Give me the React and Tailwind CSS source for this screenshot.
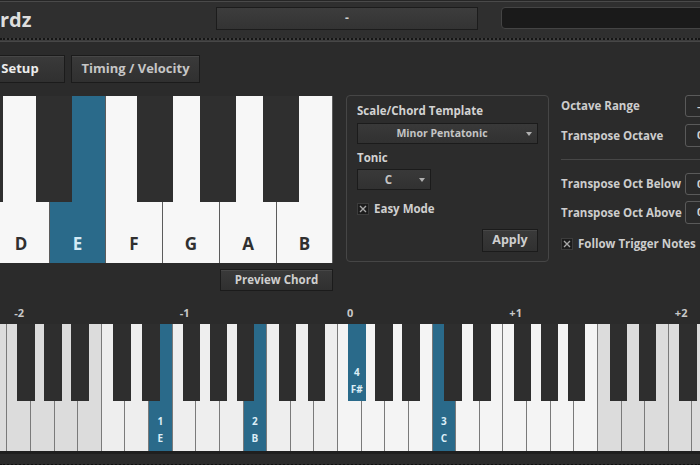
const TOP_WHITE = [
  { note: "D", w: "w-[57px]" },
  { note: "E", w: "w-[56px]", on: true },
  { note: "F", w: "w-[57px]" },
  { note: "G", w: "w-[57px]" },
  { note: "A", w: "w-[57px]" },
  { note: "B", w: "w-[56px]" },
];

const TOP_BLACK = ["left-[-33px]", "left-[36px]", "left-[137px]", "left-[200px]", "left-[263px]"];

const NAMES = ["E", "F", "G", "A", "B", "C", "D"];
const OCTAVE_W = 165.5;
const F_START = 7.34;
const BLACK_OFFSETS = [9.7, 36.7, 63.7, 105.7, 134.7];

// chord notes on the lower keyboard
const ON_WHITE = { 7: "1", 11: "2", 19: "3" };

const whiteKeys = Array.from({ length: 31 }, (_, i) => ({
  name: NAMES[i % 7],
  degree: ON_WHITE[i],
  shade: i < 5 || i >= 26 ? "bg-[#dcdcdc]" : i < 15 ? "bg-[#eeeeee]" : "bg-[#f4f4f4]",
}));

const blackKeys = [];
for (let k = -1; k < 5; k++) {
  BLACK_OFFSETS.forEach((off, j) => {
    const left = F_START + k * OCTAVE_W + off;
    if (left > -20 && left < 700) {
      blackKeys.push({ left, on: k === 2 && j === 0 });
    }
  });
}

const Arrow = () => (
  <svg width="6" height="4" viewBox="0 0 6 4" className="shrink-0">
    <path d="M0 0 L6 0 L3 4 Z" fill="#b0b0b0" />
  </svg>
);

const Check = () => (
  <div className="w-[12px] h-[12px] bg-[#1c1c1c] border border-[#3c3c3c] flex items-center justify-center shrink-0">
    <svg width="8" height="8" viewBox="0 0 8 8">
      <path d="M1 1 L7 7 M7 1 L1 7" stroke="#a8a8a8" strokeWidth="1.4" />
    </svg>
  </div>
);

const Btn = ({ children, className = "" }) => (
  <div
    className={`flex items-center justify-center whitespace-nowrap bg-gradient-to-b from-[#3a3a3a] to-[#303030] border border-[#1b1b1b] shadow-[inset_0_1px_0_#474747] font-bold ${className}`}
  >
    {children}
  </div>
);

const NumBox = ({ value }) => (
  <div className="w-[40px] h-full shrink-0 rounded-[3px] border border-[#5a5a5a] bg-[#2a2a2a] flex items-center pl-[11px] text-[11px] font-bold text-[#cfcfcf]">
    {value}
  </div>
);

export default function App() {
  return (
    <div
      className="w-[700px] h-[465px] overflow-hidden bg-[#2b2b2b] text-[#d0d0d0]"
      style={{ fontFamily: '"Open Sans", "Noto Sans", sans-serif' }}
    >
      {/* header */}
      <div className="bg-[#262626] pt-px">
        <div className="h-[37px] bg-[#2f2f2f] border-t border-[#4a4a4a] flex items-center">
          <div className="w-[216px] shrink-0 text-[20px] font-bold text-[#dedede] leading-none">rdz</div>
          <div className="w-[262px] shrink-0 h-[23px] -mt-[4px] bg-gradient-to-b from-[#3d3d3d] to-[#333333] border border-[#1c1c1c] flex items-center justify-center text-[12px] font-bold text-[#cfcfcf]">
            -
          </div>
          <div className="ml-[23px] w-[230px] shrink-0 h-[22px] -mt-[4px] rounded-[4px] bg-[#1a1a1a] border border-[#444]" />
        </div>
        <div className="h-[3px] bg-[#3b3b3b] border-t-2 border-dotted border-[#151515]" />
        <div className="h-px bg-[#474747]" />
      </div>

      {/* tabs */}
      <div className="flex gap-[6px] mt-[13px] h-[28px]">
        <Btn className="w-[90px] -ml-[25px] text-[13px] text-[#ececec]">Setup</Btn>
        <Btn className="w-[129px] text-[13px] text-[#c6c6c6]">Timing / Velocity</Btn>
      </div>

      {/* main row */}
      <div className="flex items-start mt-[12px]">
        <div className="w-[333px] shrink-0 flex flex-col">
          <div className="relative h-[167px] mt-px overflow-hidden">
            <div className="flex h-full -ml-[7px]">
              {TOP_WHITE.map((k) => (
                <div
                  key={k.note}
                  className={`${k.w} h-full border-r border-[#5c5c5c] flex items-end justify-center pb-[7px] text-[17px] font-bold ${
                    k.on ? "bg-[#2a6a8a] text-[#d4eaf5]" : "bg-[#f7f7f7] text-[#303030]"
                  }`}
                >
                  {k.note}
                </div>
              ))}
            </div>
            {TOP_BLACK.map((l) => (
              <div key={l} className={`absolute top-0 ${l} w-[36px] h-[106px] bg-[#2f2f2f]`} />
            ))}
          </div>
          <Btn className="self-end w-[113px] h-[22px] mt-[6px] text-[11.5px] text-[#cfcfcf]">Preview Chord</Btn>
        </div>

        {/* scale panel */}
        <div className="ml-[13px] w-[203px] h-[167px] shrink-0 rounded-[4px] border border-[#464646] bg-[#2c2c2c] px-[10px] pt-[7px] flex flex-col">
          <div className="text-[11.5px] font-bold leading-[16px] text-[#d2d2d2] whitespace-nowrap">Scale/Chord Template</div>
          <div className="mt-[4px] w-[181px] h-[21px] bg-gradient-to-b from-[#393939] to-[#313131] border border-[#1b1b1b] flex items-center pr-[5px]">
            <div className="flex-1 text-center text-[10.5px] font-bold text-[#c4c4c4]">Minor Pentatonic</div>
            <Arrow />
          </div>
          <div className="mt-[6px] text-[11.5px] font-bold leading-[16px] text-[#d2d2d2]">Tonic</div>
          <div className="mt-[3px] w-[74px] h-[21px] bg-gradient-to-b from-[#393939] to-[#313131] border border-[#1b1b1b] flex items-center pr-[5px]">
            <div className="flex-1 text-center text-[11.5px] font-bold text-[#c4c4c4]">C</div>
            <Arrow />
          </div>
          <div className="mt-[13px] flex items-center gap-[5px]">
            <Check />
            <span className="text-[11.5px] font-bold text-[#cfcfcf] leading-none">Easy Mode</span>
          </div>
          <Btn className="self-end mt-[14px] w-[56px] h-[23px] text-[12.5px] text-[#cfcfcf]">Apply</Btn>
        </div>

        {/* right column */}
        <div className="ml-[12px] w-[200px] shrink-0 flex flex-col text-[11.5px] font-bold text-[#cdcdcd] whitespace-nowrap">
          <div className="flex items-center h-[22px]">
            <span className="w-[124px] shrink-0">Octave Range</span>
            <NumBox value="–" />
          </div>
          <div className="flex items-center h-[23px] mt-[7px]">
            <span className="w-[124px] shrink-0">Transpose Octave</span>
            <NumBox value="0" />
          </div>
          <div className="h-px bg-[#474747] mt-[12px]" />
          <div className="flex items-center h-[22px] mt-[13px]">
            <span className="w-[124px] shrink-0">Transpose Oct Below</span>
            <NumBox value="0" />
          </div>
          <div className="flex items-center h-[23px] mt-[6px]">
            <span className="w-[124px] shrink-0">Transpose Oct Above</span>
            <NumBox value="0" />
          </div>
          <div className="flex items-center gap-[5px] mt-[14px] h-[12px]">
            <Check />
            <span className="leading-none">Follow Trigger Notes</span>
          </div>
        </div>
      </div>

      {/* octave labels */}
      <div className="flex mt-[15px] h-[14px] ml-[7.34px] text-[11px] font-bold text-[#c8c8c8] leading-[14px]">
        {["-2", "-1", "0", "+1", "+2"].map((o) => (
          <div key={o} className="w-[165.5px] shrink-0">
            <div className="w-[23.64px] text-center">{o}</div>
          </div>
        ))}
      </div>

      {/* lower keyboard */}
      <div className="relative h-[127px] mt-[4px] overflow-hidden">
        <div className="flex h-full -ml-[16.3px]">
          {whiteKeys.map((k, i) => (
            <div
              key={i}
              className={`w-[23.64px] shrink-0 h-full border-r border-[#7a7a7a] flex flex-col items-center justify-end pb-[4px] text-[10px] font-bold leading-[17px] ${
                k.degree ? "bg-[#2a6a8a] text-[#dceef7]" : k.shade
              }`}
            >
              {k.degree && (
                <>
                  <span>{k.degree}</span>
                  <span>{k.name}</span>
                </>
              )}
            </div>
          ))}
        </div>
        {blackKeys.map((b, i) => (
          <div
            key={i}
            className={`absolute top-0 w-[17.5px] h-[77px] flex flex-col items-center justify-end pb-[3px] text-[10px] font-bold leading-[17px] ${
              b.on ? "bg-[#2a6a8a] text-[#dceef7]" : "bg-[#2e2e2e]"
            }`}
            style={{ left: b.left }}
          >
            {b.on && (
              <>
                <span>4</span>
                <span>F#</span>
              </>
            )}
          </div>
        ))}
      </div>

      {/* bottom strip */}
      <div className="h-[3px] bg-[#1f1f1f]" />
      <div className="h-[10px] bg-[#2b2b2b]" />
      <div className="h-[2px] border-t-2 border-dotted border-[#111]" />
    </div>
  );
}
